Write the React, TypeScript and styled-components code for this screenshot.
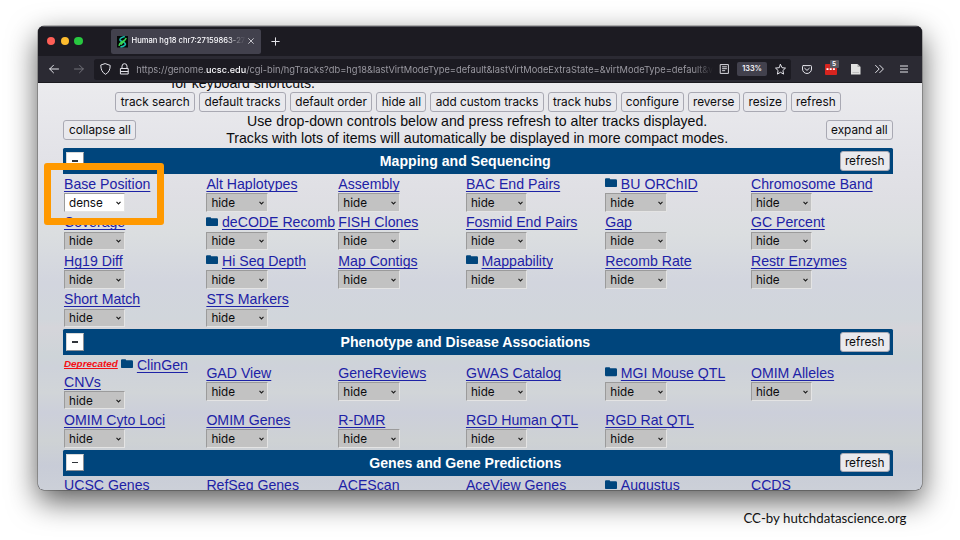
import React from 'react';
import styled, { createGlobalStyle } from 'styled-components';

const NAVY = '#00457c';
const LINK = '#1d22a6';
const UI = "Inter, 'Liberation Sans', sans-serif";
const ARIAL = "'Liberation Sans', Arial, sans-serif";

const GlobalStyle = createGlobalStyle`
  * { box-sizing: border-box; }
  body { margin: 0; background: #fff; overflow: hidden; }
`;

const Slide = styled.main`
  position: relative;
  width: 960px;
  height: 540px;
  overflow: hidden;
  padding: 25.5px 38.5px 0 38px;
  background: #fff;
`;

const Browser = styled.section`
  width: 883.5px;
  height: 464.5px;
  border-radius: 6px;
  overflow: hidden;
  display: flex;
  flex-direction: column;
  background: #1c1b22;
  box-shadow: 0 0 0 0.5px rgba(0, 0, 0, 0.45), 0 11px 30px rgba(0, 0, 0, 0.66);
`;

const TabBar = styled.header`
  height: 30.5px;
  flex: none;
  display: flex;
  align-items: center;
  padding: 0 9px;
  background: #1c1b22;
  border-top: 0.5px solid #55555c;
`;

const Lights = styled.div`
  display: flex;
  gap: 5.5px;
  width: 64px;
`;

const Light = styled.span<{ $color: string }>`
  width: 8.2px;
  height: 8.2px;
  border-radius: 50%;
  background: ${(p) => p.$color};
`;

const Tab = styled.div`
  width: 150px;
  height: 24.5px;
  display: flex;
  align-items: center;
  padding: 0 7px 0 6px;
  border-radius: 2.5px;
  background: #42414d;
`;

const TabTitle = styled.span`
  width: 114px;
  margin-left: 3.5px;
  overflow: hidden;
  white-space: nowrap;
  font: 500 7.6px/12px ${UI};
  color: #fbfbfe;
  mask-image: linear-gradient(90deg, #000 84%, rgba(0, 0, 0, 0.3) 93%, transparent 100%);
`;

const TabClose = styled.svg`
  width: 6px;
  height: 6px;
  margin-left: 2px;
`;

const NewTab = styled.svg`
  width: 9px;
  height: 9px;
  margin-left: 10px;
`;

const NavBar = styled.nav`
  height: 27px;
  flex: none;
  display: flex;
  align-items: center;
  background: #2b2a33;
  border-bottom: 1px solid #1b1a20;
`;

const NavArrow = styled.svg<{ $gap: number }>`
  width: 10px;
  height: 10px;
  margin-left: ${(p) => p.$gap}px;
`;

const AddressBar = styled.div`
  width: 697px;
  height: 21px;
  margin-left: 10.5px;
  display: flex;
  align-items: center;
  padding-left: 5.5px;
  border-radius: 2.5px;
  background: #1c1b22;
`;

const Icon = styled.svg<{ $w: number; $h: number; $gap: number }>`
  flex: none;
  width: ${(p) => p.$w}px;
  height: ${(p) => p.$h}px;
  margin-left: ${(p) => p.$gap}px;
  overflow: visible;
`;

const Url = styled.span`
  width: 577px;
  margin: 1px 0 0 7.8px;
  overflow: hidden;
  white-space: nowrap;
  font: 400 9.3px/14px ${UI};
  color: #9a99a1;
  mask-image: linear-gradient(90deg, #000 96.5%, transparent 100%);
`;

const Domain = styled.b`
  font-weight: 500;
  font-size: 9.1px;
  color: #fbfbfe;
`;

const Zoom = styled.span`
  width: 29.5px;
  height: 14px;
  margin-left: 8.7px;
  border-radius: 2px;
  background: #42414d;
  color: #fbfbfe;
  font: 600 7.3px/14px ${UI};
  text-align: center;
`;

const Extension = styled.span`
  position: relative;
  width: 11.5px;
  height: 11px;
  margin: 1px 0 0 13px;
  border-radius: 1px;
  background: #d7241f;
`;

const ExtensionDots = styled.svg`
  display: block;
  width: 11.5px;
  height: 11px;
`;

const ExtensionCount = styled.span`
  position: absolute;
  left: 4.5px;
  top: -4px;
  width: 9px;
  height: 8px;
  border-radius: 1px;
  background: #58575f;
  color: #fff;
  text-align: center;
  font: 600 6.5px/8px ${UI};
`;

const Page = styled.div`
  height: 407px;
  overflow: hidden;
  display: flex;
  flex-direction: column;
  padding: 0 28.5px 0 25.3px;
  background: linear-gradient(
    180deg, #ebebee 0%, #e3e3e8 17%, #dfdfe4 28%, #dbdee0 37%, #d2d5de 49%, #d1d6db 58%,
    #d5d5da 60%, #ced4d8 67%, #ced2da 70%, #d1d5d8 76%, #cccfda 81%, #ced2d4 88%, #c8ccd7 94%, #ccd0d8 100%
  );
  font: 400 14.13px/17px ${ARIAL};
  color: #0c0c0e;
`;

const Shortcuts = styled.p`
  height: 9px;
  flex: none;
  margin: 0 0 0 108px;
  display: flex;
  align-items: flex-end;
  overflow: hidden;
  line-height: 18px;
`;

const ButtonRow = styled.div`
  height: 20px;
  flex: none;
  display: flex;
  gap: 3.8px;
  margin-left: 52px;
`;

const Button = styled.button<{ $w: number }>`
  width: ${(p) => p.$w}px;
  height: 19.8px;
  flex: none;
  padding: 1px 0 0;
  border: 1px solid #a9a9b3;
  border-radius: 3px;
  background: #e9e9ed;
  color: #0c0c0e;
  font: 400 11.8px/17px ${UI};
  letter-spacing: -0.03px;
  white-space: nowrap;
`;

const Intro = styled.div`
  height: 36px;
  flex: none;
  display: flex;
  align-items: center;
  justify-content: space-between;
`;

const IntroText = styled.p`
  margin: 0;
  padding-right: 8px;
  text-align: center;
  white-space: nowrap;
`;

const GroupHeader = styled.div`
  height: 26px;
  flex: none;
  display: flex;
  align-items: center;
  padding: 0 3.3px 0 3.2px;
  border-radius: 1.5px 1.5px 0 0;
  background: ${NAVY};
`;

const Toggle = styled.button`
  width: 17.4px;
  height: 17.2px;
  display: flex;
  align-items: center;
  justify-content: center;
  padding: 0;
  border: 1px solid;
  border-color: #d8d8d8 #8c9096 #8c9096 #d8d8d8;
  background: #fff;
`;

const Dash = styled.span`
  width: 6.4px;
  height: 1.8px;
  background: #30343a;
`;

const GroupTitle = styled.h2`
  flex: 1;
  margin: 0;
  padding-left: 7px;
  text-align: center;
  font: 700 14.12px/18px ${ARIAL};
  color: #fff;
`;

const Grid = styled.div<{ $rows: string }>`
  flex: none;
  display: grid;
  grid-template-columns: 142.4px 131.9px 127.7px 139.3px 145.7px 141px;
  grid-template-rows: ${(p) => p.$rows};
  padding: 0.5px 0 0 0.7px;
`;

const Cell = styled.div`
  display: flex;
  flex-direction: column;
  justify-content: center;
  white-space: nowrap;
`;

const TrackLine = styled.div`
  height: 17.3px;
  display: flex;
`;

const TrackLink = styled.a`
  color: ${LINK};
  text-decoration: underline;
  text-decoration-thickness: 1px;
  text-underline-offset: 1.5px;
  text-decoration-skip-ink: none;
`;

const Deprecated = styled.span`
  color: #f40d12;
  font: italic 700 9.9px/14px ${ARIAL};
  text-decoration: underline;
  text-decoration-skip-ink: none;
  margin-right: 3.5px;
`;

const FolderIcon = styled.svg`
  flex: none;
  width: 12px;
  height: 9.4px;
  margin: 2.2px 3.6px 0 0;
`;

const Select = styled.div<{ $active: boolean }>`
  width: 61.3px;
  height: 18.4px;
  display: flex;
  align-items: center;
  justify-content: space-between;
  padding: 1px 3px 0 4px;
  border: 1px solid;
  border-color: #9b9b9b #e4e4e4 #e4e4e4 #9b9b9b;
  background: ${(p) => (p.$active ? '#fff' : '#c2c2c2')};
  color: #0c0c0e;
  font: 400 11.7px/16px ${UI};
`;

const Chevron = styled.svg`
  width: 5px;
  height: 4px;
`;

const Highlight = styled.div`
  position: absolute;
  left: 43.5px;
  top: 162.5px;
  width: 120.3px;
  height: 62.8px;
  border: 7.8px solid #ff9900;
  border-radius: 3px;
`;

const Credit = styled.footer`
  margin-top: 19px;
  padding-right: 15px;
  text-align: right;
  font: 400 13.25px/18px Lato, sans-serif;
  color: #111;
`;

type Track = { name: string; folder?: boolean; active?: boolean };

const folder = (name: string): Track => ({ name, folder: true });
const plain = (name: string): Track => ({ name });

const MAPPING: Track[] = [
  { name: 'Base Position', active: true }, plain('Alt Haplotypes'), plain('Assembly'),
  plain('BAC End Pairs'), folder('BU ORChID'), plain('Chromosome Band'),
  plain('Coverage'), folder('deCODE Recomb'), plain('FISH Clones'),
  plain('Fosmid End Pairs'), plain('Gap'), plain('GC Percent'),
  plain('Hg19 Diff'), folder('Hi Seq Depth'), plain('Map Contigs'),
  folder('Mappability'), plain('Recomb Rate'), plain('Restr Enzymes'),
  plain('Short Match'), plain('STS Markers'),
];

const PHENOTYPE: Track[] = [
  plain('GAD View'), plain('GeneReviews'), plain('GWAS Catalog'),
  folder('MGI Mouse QTL'), plain('OMIM Alleles'),
  plain('OMIM Cyto Loci'), plain('OMIM Genes'), plain('R-DMR'),
  plain('RGD Human QTL'), plain('RGD Rat QTL'),
];

const GENES: Track[] = [
  plain('UCSC Genes'), plain('RefSeq Genes'), plain('ACEScan'),
  plain('AceView Genes'), folder('Augustus'), plain('CCDS'),
];

const ACTIONS: [string, number][] = [
  ['track search', 79.9], ['default tracks', 87], ['default order', 82.6], ['hide all', 50.3],
  ['add custom tracks', 113.5], ['track hubs', 69.2], ['configure', 63.5], ['reverse', 51.7],
  ['resize', 43.7], ['refresh', 50],
];

const Folder = () => (
  <FolderIcon viewBox="0 0 12 9.4">
    <path d="M0 1.3Q0 .2 1 .2H4.3Q5 .2 5.2 1.3H10.8Q12 1.3 12 2.4V8Q12 9.2 10.8 9.2H1.2Q0 9.2 0 8Z" fill={NAVY} />
  </FolderIcon>
);

const Dropdown = ({ value }: { value: string }) => (
  <Select $active={value === 'dense'}>
    {value}
    <Chevron viewBox="0 0 5 4">
      <path d="M.5 .8L2.5 2.9L4.5 .8" fill="none" stroke="#1a1a1a" strokeWidth="1.1" />
    </Chevron>
  </Select>
);

const TrackCell = ({ track }: { track: Track }) => (
  <Cell>
    <TrackLine>
      {track.folder && <Folder />}
      <TrackLink>{track.name}</TrackLink>
    </TrackLine>
    <Dropdown value={track.active ? 'dense' : 'hide'} />
  </Cell>
);

const Header = ({ title }: { title: string }) => (
  <GroupHeader>
    <Toggle aria-label="collapse"><Dash /></Toggle>
    <GroupTitle>{title}</GroupTitle>
    <Button $w={50}>refresh</Button>
  </GroupHeader>
);

const line = { fill: 'none', stroke: '#e4e4ea', strokeWidth: 1, strokeLinecap: 'round', strokeLinejoin: 'round' } as const;

export default function App() {
  return (
    <Slide>
      <GlobalStyle />
      <Browser>
        <TabBar>
          <Lights>
            <Light $color="#ff5f57" />
            <Light $color="#febc2e" />
            <Light $color="#28c840" />
          </Lights>
          <Tab>
            <Icon $w={11} $h={11.5} $gap={0} viewBox="0 0 11 11.5">
              <rect width="11" height="11.5" fill="#050808" />
              <path d="M7.800 .5C5 1.200 2.600 2.400 3 4C3.500 5.700 8.300 6 8.400 8C8.400 9.800 5.500 10.600 3.400 11" fill="none" stroke="#19c0ae" strokeWidth="1.700" />
              <path d="M9.200 2C8.600 4.200 6.500 4.900 4.800 5.900C3 7 2.200 8 2 9.800M8.200 4L3.600 8.600" fill="none" stroke="#3ad64f" strokeWidth="1.500" />
            </Icon>
            <TabTitle>Human hg18 chr7:27159863-271</TabTitle>
            <TabClose viewBox="0 0 6 6"><path d="M.6 .6L5.400 5.400M5.400 .6L.6 5.400" {...line} strokeWidth={0.8} /></TabClose>
          </Tab>
          <NewTab viewBox="0 0 9 9"><path d="M4.500 .8V8.200M.8 4.500H8.200" {...line} strokeWidth={1} /></NewTab>
        </TabBar>
        <NavBar>
          <NavArrow $gap={11} viewBox="0 0 10 10"><path d="M9.500 5H.7M4.500 1.200L.7 5L4.500 8.800" {...line} /></NavArrow>
          <NavArrow $gap={14.5} viewBox="0 0 10 10"><path d="M.5 5H9.300M5.500 1.200L9.300 5L5.500 8.800" {...line} stroke="#73727b" /></NavArrow>
          <AddressBar>
            <Icon $w={11} $h={12} $gap={0} viewBox="0 0 11 12"><path d="M5.500 .7L10.200 2.400C10.200 6.500 8.800 9.600 5.500 11.300C2.200 9.600 .8 6.500 .8 2.400Z" {...line} /></Icon>
            <Icon $w={9} $h={12} $gap={9} viewBox="0 0 9 12"><path d="M.8 5.500H8.200V11H.8ZM2 5.300V3.200A2.500 2.500 0 0 1 7 3.200V5.300M1 8.500H8" {...line} /></Icon>
            <Url>https://genome.<Domain>ucsc.edu</Domain>/cgi-bin/hgTracks?db=hg18&amp;lastVirtModeType=default&amp;lastVirtModeExtraState=&amp;virtModeType=default&amp;v</Url>
            <Icon $w={9} $h={10} $gap={6.3} viewBox="0 0 9 10"><path d="M.6 .6H8.400V9.400H.6ZM2.500 2.800H6.500M2.500 4.700H6.500M2.500 6.700H4.800" {...line} strokeWidth={0.95} /></Icon>
            <Zoom>133%</Zoom>
            <Icon $w={11} $h={11} $gap={8} viewBox="0 0 11 11"><path d="M5.500 .5L7 3.700L10.500 4.100L7.900 6.500L8.600 10.100L5.500 8.300L2.400 10.100L3.100 6.500L.5 4.100L4 3.700Z" {...line} /></Icon>
          </AddressBar>
          <Icon $w={10} $h={9} $gap={11} viewBox="0 0 10 9"><path d="M1.300 .6H8.700Q9.500 .6 9.500 1.400V4A4.500 4.500 0 0 1 .5 4V1.400Q.5 .6 1.300 .6ZM2.700 3.300L5 5.400L7.300 3.300" {...line} /></Icon>
          <Extension>
            <ExtensionDots viewBox="0 0 11.5 11"><path d="M1.500 5.200H3.500M4.700 5.200H6.700M7.900 5.200H9.900" stroke="#fff" strokeWidth="1.700" /></ExtensionDots>
            <ExtensionCount>5</ExtensionCount>
          </Extension>
          <Icon $w={9.5} $h={10.5} $gap={14} viewBox="0 0 9.500 10.500"><path d="M0 0H6.500L9.500 3V10.500H0Z" fill="#e2e2e2" /><path d="M6.500 0V3H9.500" fill="#aaa" /><path d="M1.500 8.500H8" stroke="#aaa" strokeWidth=".6" /></Icon>
          <Icon $w={9} $h={8} $gap={15} viewBox="0 0 9 8"><path d="M.6 .4L4.200 4L.6 7.600M4.800 .4L8.400 4L4.800 7.600" {...line} /></Icon>
          <Icon $w={8} $h={8} $gap={16.3} viewBox="0 0 8 8"><path d="M.4 1H7.600M.4 4H7.600M.4 7H7.600" {...line} /></Icon>
        </NavBar>
        <Page>
          <Shortcuts>for keyboard shortcuts.</Shortcuts>
          <ButtonRow>{ACTIONS.map(([label, w]) => <Button key={label} $w={w}>{label}</Button>)}</ButtonRow>
          <Intro>
            <Button $w={73.2}>collapse all</Button>
            <IntroText>
              Use drop-down controls below and press refresh to alter tracks displayed.<br />
              Tracks with lots of items will automatically be displayed in more compact modes.
            </IntroText>
            <Button $w={67.2}>expand all</Button>
          </Intro>
          <Header title="Mapping and Sequencing" />
          <Grid $rows="repeat(4, 38.5px) 0.5px">
            {MAPPING.map((t) => <TrackCell key={t.name} track={t} />)}
          </Grid>
          <Header title="Phenotype and Disease Associations" />
          <Grid $rows="55px 38.5px 0.5px">
            <Cell>
              <TrackLine><Deprecated>Deprecated</Deprecated><Folder /><TrackLink>ClinGen</TrackLink></TrackLine>
              <TrackLine><TrackLink>CNVs</TrackLink></TrackLine>
              <Dropdown value="hide" />
            </Cell>
            {PHENOTYPE.map((t) => <TrackCell key={t.name} track={t} />)}
          </Grid>
          <Header title="Genes and Gene Predictions" />
          <Grid $rows="38.5px">
            {GENES.map((t) => <TrackCell key={t.name} track={t} />)}
          </Grid>
        </Page>
      </Browser>
      <Credit>CC-by hutchdatascience.org</Credit>
      <Highlight />
    </Slide>
  );
}
